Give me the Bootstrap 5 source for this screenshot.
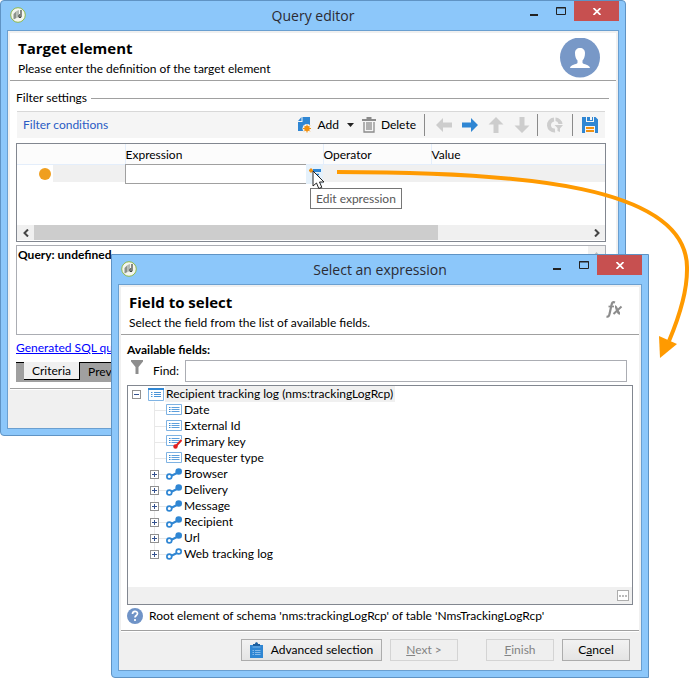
<!DOCTYPE html>
<html lang="en">
<head>
<meta charset="utf-8">
<meta name="viewport" content="width=device-width, initial-scale=1">
<title>Query editor</title>
<link href="https://cdn.jsdelivr.net/npm/bootstrap@5.3.0/dist/css/bootstrap.min.css" rel="stylesheet">
<style>
  body { font-family: Lato, "Open Sans", sans-serif; font-size: 12px; line-height: 16px; color: #000; background: #fff; }
  .desktop { min-height: 681px; overflow: hidden; }
  .win { background: #8cc7fa; border: 1px solid #5f93c4; padding: 0 6px 6px; }
  .win-query { top: 0; left: 0; right: 73px; border-radius: 4px 4px 0 4px; }
  .win-select { top: 254px; left: 111px; right: 50px; border-bottom-left-radius: 4px; }
  .titlebar { display: grid; grid-template-columns: 1fr auto 1fr; height: 29px; }
  .titlebar h1, .head h2 { font-family: "Open Sans", "Noto Sans", sans-serif; }
  .titlebar h1 { font-size: 14px; line-height: 30px; margin: 0; font-weight: 400; color: #2b2b33; }
  .titlebar svg { display: block; }
  .logo { margin: 6px 0 0 3px; }
  .ctl { border: 0; background: transparent; padding: 0; width: 27px; height: 20px; display: flex; align-items: center; justify-content: center; }
  .ctl-close { width: 45px; background: #c75050; }
  .frame { background: #fff; border: 1px solid #6a9fd0; }
  .pane { border: 2px solid #f0f0f0; }
  .head { padding: 5px 16px 3px 8px; border-bottom: 1px solid #a0a0a0; height: 48px; }
  .head h2 { font-size: 15px; line-height: 20px; font-weight: 700; margin: 0 0 3px; }
  .head p { margin: 0; }
  .rule { height: 1px; background: #a0a0a0; }
  .section { padding: 9px 10px 6px 6px; }
  .group { margin-right: -3px; gap: 4px; }
  .tools { margin: 5px 1px 5px; height: 27px; border-top: 1px solid #d8d8d8; background: #f5f5f5; padding: 0 6px; }
  .tools a { color: #2a5bc4; text-decoration: none; }
  .tool { border: 0; background: transparent; padding: 0; display: flex; align-items: center; gap: 5px; color: #000; }
  .arrows { gap: 8px; margin: 0 -2px 0 2px; }
  .sep { width: 1px; height: 22px; background: #8a8a8a; }
  .sheet { border: 1px solid #828790; height: 99px; }
  .sheet table { width: 100%; table-layout: fixed; border-collapse: collapse; }
  .sheet th { font-weight: 400; height: 20px; padding: 2px 0 0; line-height: 17px; background: #fcfcfc; border-left: 1px solid #e4eefb; border-bottom: 1px solid #e4eefb; }
  .sheet th:first-child { border-left: 0; }
  .sheet td { height: 19px; padding: 0; }
  .c-mark, .c-op { width: 108px; }
  .c-expr { width: 198px; }
  .shade { background: #f0f0f0; background-clip: padding-box; border-bottom: 1px solid #fff; height: 18px; }
  .dot { width: 12px; height: 12px; border-radius: 50%; background: #f09f1f; margin: 0 2px 0 22px; flex: none; }
  .expr-input { border: 1px solid #a0a0a0; border-right: 0; height: 20px; min-width: 0; padding: 0 3px; outline: 0; border-radius: 0; margin-top: -1px; }
  .expr-btn { width: 17px; height: 19px; border: 0; padding: 0; background: #e5f1fb; flex: none; }
  .pointer { left: 187px; top: 5px; z-index: 3; }
  .tip { left: 185px; top: 23px; border: 1px solid #767676; background: #fff; color: #575757; padding: 2px 5px; height: 21px; white-space: nowrap; z-index: 2; }
  .hscroll { height: 15px; background: #f0f0f0; margin-bottom: 1px; }
  .hscroll button { width: 17px; border: 0; padding: 0; background: transparent; display: flex; align-items: center; justify-content: center; }
  .thumb { width: 73%; background: #cdcdcd; }
  .query { border: 1px solid #abadb3; height: 90px; margin-top: 3px; font-weight: 700; padding: 1px 1px; }
  .query-scroll { width: 17px; background: #f0f0f0; margin: -1px -1px -1px auto; padding-top: 6px; }
  .sql { color: #00f; display: inline-block; margin: 5px 0 6px; }
  .tabs { background: #a0a0a0; height: 20px; border-top: 1px solid #000; padding-left: 8px; }
  .tabs button { border: 0; padding: 0 8px; background: transparent; color: #000; height: 18px; line-height: 16px; }
  .tabs .current { background: #f0f0f0; border-right: 1px solid #000; border-bottom: 1px solid #000; margin-top: -1px; height: 18px; }
  .foot { background: #f0f0f0; border-top: 1px solid #fff; min-height: 37px; }
  .fields { padding: 7px 6px 6px; }
  .find { margin: 2px 6px 3px 4px; }
  .find label { margin: 0 6px 0 10px; width: 26px; white-space: nowrap; }
  .find input { height: 22px; border: 1px solid #abadb3; min-width: 0; border-radius: 0; padding: 0 4px; outline: 0; }
  .treebox { border: 1px solid #828790; height: 220px; }
  .tree, .tree ul { list-style: none; margin: 0; padding: 0; }
  .tree { padding-left: 4px; }
  .tree ul { margin-left: 18px; position: relative; }
  .tree ul::before { content: ""; position: absolute; left: 4px; top: 0; bottom: 8px; border-left: 1px solid #e8e8e8; }
  .node { display: flex; align-items: center; height: 16px; position: relative; }
  .tree ul .node::before { content: ""; position: absolute; left: 4px; width: 13px; top: 8px; border-top: 1px solid #e8e8e8; }
  .box { width: 9px; height: 9px; border: 1px solid #919191; background: #fff; padding: 0; flex: none; display: flex; align-items: center; justify-content: center; z-index: 1; }
  .box-gap { width: 9px; flex: none; }
  .node > svg { margin: 0 2px 0 7px; flex: none; z-index: 1; background: #fff; }
  .node .chosen { background: #f0f0f0; padding: 0 2px 0 1px; margin-left: -1px; }
  .status { background: #f0f0f0; height: 17px; padding-right: 3px; }
  .status button { width: 12px; height: 11px; border: 1px solid #adadad; background: #fff; padding: 0; display: flex; align-items: center; justify-content: center; }
  .hint { margin-top: 3px; gap: 6px; }
  .actions { padding: 7px 9px 7px; }
  .push { height: 22px; width: 68px; border: 1px solid #acacac; background: linear-gradient(#f2f2f2, #e4e4e4); padding: 0; color: #000; line-height: 18px; }
  .push:disabled { color: #838383; border-color: #d4d4d4; background: #efefef; }
  .push-wide { width: 141px; margin-right: 8px; gap: 8px; }
  .flow { top: 160px; right: 0; pointer-events: none; z-index: 5; }
</style>
</head>
<body>
<main class="desktop position-relative">

  <section class="win win-query position-absolute" aria-label="Query editor">
    <header class="titlebar">
      <svg class="logo" width="16" height="16" viewBox="0 0 16 16"><circle cx="8" cy="8" r="7.3" fill="#f4f6ef" stroke="#8fb84a"/><path d="M3.500 7l3-3v7l-3 1.500z" fill="#8b918b"/><path d="M6.500 4l2.500-1v7l-2.500 1z" fill="#b4bab4"/><path d="M11 3v7M10 7.500c-2 1-1 4 1 2.500" fill="none" stroke="#3d423d" stroke-width="1.200"/></svg>
      <h1>Query editor</h1>
      <div class="d-flex justify-content-end">
        <button class="ctl" aria-label="Minimize"><svg width="8" height="12"><path d="M0 10h8" stroke="#222" stroke-width="2"/></svg></button>
        <button class="ctl" aria-label="Maximize"><svg width="10" height="8"><path d="M.5.500h9v7h-9zM0 1h10" fill="none" stroke="#222"/></svg></button>
        <button class="ctl ctl-close" aria-label="Close"><svg width="8" height="7"><path d="M.5 0l7 7M7.500 0l-7 7" stroke="#fff" stroke-width="1.700"/></svg></button>
      </div>
    </header>
    <div class="frame"><div class="pane">
      <div class="head d-flex justify-content-between">
        <div><h2>Target element</h2><p>Please enter the definition of the target element</p></div>
        <svg width="40" height="40" viewBox="0 0 40 40" class="flex-shrink-0"><circle cx="20" cy="19.500" r="20" fill="#7898c7"/><path d="M20 10c-3 0-5 2-5 5 0 3.500 1 6 2.500 7.500v2.500c-1 1.500-7 1.500-7.500 5h20c-.5-3.500-6.500-3.500-7.500-5v-2.500c1.500-1.500 2.500-4 2.500-7.500 0-3-2-5-5-5z" fill="#fff"/></svg>
      </div>
      <div class="section">
        <div class="group d-flex align-items-center"><span>Filter settings</span><div class="rule flex-grow-1"></div></div>
        <div class="tools d-flex align-items-center">
          <a href="#">Filter conditions</a>
          <button class="tool ms-auto"><svg width="14" height="16" viewBox="0 0 14 16"><path d="M4.500 0H12v8H6v6H0V5h4.500z" fill="#2f86d3"/><path d="M0 4l3.500-4v4z" fill="#2f86d3"/><circle cx="9" cy="11.500" r="4.500" fill="#f5f5f5"/><circle cx="9" cy="11.500" r="2.700" fill="#f09010"/><path d="M9 7.500v8M5 11.500h8M6.200 8.700l5.600 5.600M11.800 8.700l-5.600 5.600" stroke="#f09010"/></svg><span>Add</span></button>
          <button class="tool mx-2" aria-label="More add options"><svg width="7" height="4"><path d="M0 0h7l-3.500 4z" fill="#222"/></svg></button>
          <button class="tool"><svg width="14" height="16" viewBox="0 0 14 16"><path d="M0 2h14v2H0zM4.500 0h5v2h-5z" fill="#8b8b8b"/><path d="M2 5v10h10V5M5 5v8M7 5v8M9 5v8" fill="none" stroke="#8b8b8b" stroke-width="1.300"/></svg><span>Delete</span></button>
          <span class="sep mx-2"></span>
          <div class="arrows d-flex">
            <button class="tool" aria-label="Move left" disabled><svg width="18" height="16" viewBox="0 0 18 16"><path d="M1 8l7-7v4.500h9v5H8V15z" fill="#cdcdcd"/></svg></button>
            <button class="tool" aria-label="Move right"><svg width="18" height="16" viewBox="0 0 18 16"><path d="M17 8l-7-7v4.500H1v5h9V15z" fill="#2f86d3"/></svg></button>
            <button class="tool" aria-label="Move up" disabled><svg width="18" height="16" viewBox="0 0 18 16"><path d="M9 0l7.500 7.500H11.500V16h-5V7.500H1.500z" fill="#cdcdcd"/></svg></button>
            <button class="tool" aria-label="Move down" disabled><svg width="18" height="16" viewBox="0 0 18 16"><path d="M9 16l7.500-7.500H11.500V0h-5v8.500H1.500z" fill="#cdcdcd"/></svg></button>
          </div>
          <span class="sep mx-2"></span>
          <button class="tool" aria-label="Distribution of values" disabled><svg width="18" height="16" viewBox="0 0 18 16"><path d="M8 2.500A5.500 5.500 0 1 0 9 13.500" fill="none" stroke="#cdcdcd" stroke-width="4"/><path d="M9.500.5a7.500 7.500 0 0 1 7 6.500h-4a3.500 3.500 0 0 0-3-3zM8.500 8H17l-3 3.500V15l-2.500-1v-3z" fill="#cdcdcd"/></svg></button>
          <span class="sep mx-2"></span>
          <button class="tool" aria-label="Save"><svg width="18" height="16" viewBox="0 0 18 16"><path d="M1 0h4v5h8V0h1.500L17 2.500V16h-3V9H4v7H1z" fill="#2f86d3"/><path d="M6 0h6v4H6z" fill="#2f86d3"/><path d="M9 0h2v3H9z" fill="#f5f5f5"/><path d="M4 6h10v3H4z" fill="#2f86d3"/><path d="M5 11h8M5 14h8" stroke="#f09010" stroke-width="2"/></svg></button>
        </div>
        <div class="sheet d-flex flex-column">
          <table>
            <thead><tr><th class="c-mark"></th><th class="c-expr">Expression</th><th class="c-op">Operator</th><th>Value</th></tr></thead>
            <tbody><tr>
              <td><div class="d-flex align-items-center"><span class="dot"></span><div class="shade flex-grow-1"></div></div></td>
              <td><div class="d-flex position-relative">
                <input class="expr-input flex-grow-1" type="text" aria-label="Expression">
                <button class="expr-btn" aria-label="Edit expression"><svg width="14" height="14" viewBox="0 0 14 14"><path d="M5 1h8v3H5z" fill="#2f86d3"/><path d="M5 6.500h6M5 9.500h7" stroke="#2f86d3" stroke-width="1.500"/><path d="M1 2.500h4M3 .5v4" stroke="#f09010" stroke-width="2"/></svg></button>
                <svg class="pointer position-absolute" width="14" height="20" viewBox="0 0 14 20"><path d="M1 1v15l3.500-3 2.300 5.500 3-1.200-2.300-5.300H12z" fill="#fff" stroke="#222"/></svg>
                <div class="tip position-absolute" role="tooltip">Edit expression</div>
              </div></td>
              <td><div class="shade"></div></td><td><div class="shade"></div></td>
            </tr></tbody>
          </table>
          <div class="hscroll d-flex mt-auto">
            <button aria-label="Scroll left"><svg width="6" height="8"><path d="M5 0.500L1.500 4 5 7.500" fill="none" stroke="#444" stroke-width="2"/></svg></button>
            <div class="flex-grow-1 d-flex"><div class="thumb"></div></div>
            <button aria-label="Scroll right"><svg width="6" height="8"><path d="M1 0.500L4.500 4 1 7.500" fill="none" stroke="#444" stroke-width="2"/></svg></button>
          </div>
        </div>
        <div class="query d-flex"><span>Query: undefined</span><div class="query-scroll d-flex justify-content-center"><svg width="7" height="4"><path d="M0 4l3.500-4L7 4z" fill="#bbb"/></svg></div></div>
        <a class="sql" href="#">Generated SQL qu</a>
        <div class="tabs d-flex"><button class="current">Criteria</button><button>Preview</button></div>
      </div>
      <div class="rule"></div>
      <div class="foot"></div>
    </div></div>
  </section>

  <section class="win win-select position-absolute" aria-label="Select an expression">
    <header class="titlebar">
      <svg class="logo" width="16" height="16" viewBox="0 0 16 16"><circle cx="8" cy="8" r="7.3" fill="#f4f6ef" stroke="#8fb84a"/><path d="M3.500 7l3-3v7l-3 1.500z" fill="#8b918b"/><path d="M6.500 4l2.500-1v7l-2.500 1z" fill="#b4bab4"/><path d="M11 3v7M10 7.500c-2 1-1 4 1 2.500" fill="none" stroke="#3d423d" stroke-width="1.200"/></svg>
      <h1>Select an expression</h1>
      <div class="d-flex justify-content-end">
        <button class="ctl" aria-label="Minimize"><svg width="8" height="12"><path d="M0 10h8" stroke="#222" stroke-width="2"/></svg></button>
        <button class="ctl" aria-label="Maximize"><svg width="10" height="8"><path d="M.5.500h9v7h-9zM0 1h10" fill="none" stroke="#222"/></svg></button>
        <button class="ctl ctl-close" aria-label="Close"><svg width="8" height="7"><path d="M.5 0l7 7M7.500 0l-7 7" stroke="#fff" stroke-width="1.700"/></svg></button>
      </div>
    </header>
    <div class="frame"><div class="pane">
      <div class="head d-flex justify-content-between">
        <div><h2>Field to select</h2><p>Select the field from the list of available fields.</p></div>
        <svg class="mt-2" width="17" height="20" viewBox="0 0 17 20" fill="none" stroke="#8d8d8d"><path d="M9 2.500C6.500 1.500 6 3 5.500 5L3.500 14c-.5 2.200-1 3-3 2.500" stroke-width="2.200"/><path d="M2.500 6.500h5.500" stroke-width="1.700"/><path d="M9 6.500c2 0 2 7 5 7" stroke-width="2.500"/><path d="M15.500 6.500L7.500 14" stroke-width="2"/></svg>
      </div>
      <div class="fields">
        <div class="fw-bold">Available fields:</div>
        <div class="find d-flex align-items-center">
          <svg width="12" height="14" class="align-self-start"><path d="M0 0h12v1.500L7.500 7v7h-3V7L0 1.500z" fill="#8d8d8d"/></svg>
          <label for="find">Find:</label><input id="find" type="text" class="flex-grow-1">
        </div>
        <div class="treebox d-flex flex-column">
          <svg width="0" height="0" class="position-absolute">
            <symbol id="field" viewBox="0 0 16 12"><path d="M.5.500h15v10H.5z" fill="#fff" stroke="#7fb3e3"/><path d="M3 3.500h1.500M3 7.500h1.500M3 5.500h1.500" stroke="#2f86d3"/><path d="M5.500 3.500h8M5.500 5.500h8M5.500 7.500h8" stroke="#5c9fdc"/></symbol>
            <symbol id="link" viewBox="0 0 16 12"><path d="M5 8l6-3" stroke="#2f86d3" stroke-width="2"/><circle cx="3.300" cy="8.500" r="2.400" fill="#fff" stroke="#2f86d3" stroke-width="1.700"/><circle cx="12.700" cy="3.500" r="3.300" fill="#2f86d3"/></symbol>
          </svg>
          <ul class="tree">
            <li>
              <div class="node"><button class="box" aria-label="Collapse"><svg width="5" height="5"><path d="M0 2.500h5" stroke="#34528f"/></svg></button><svg width="16" height="13" viewBox="0 0 16 13"><path d="M.5 1.500h15v11H.5z" fill="#fff" stroke="#7fb3e3"/><path d="M0 1h16" stroke="#2f86d3" stroke-width="2"/><path d="M3 4.500h1.500M3 6.500h1.500M3 8.500h1.500M6 4.500h7M6 6.500h7M6 8.500h7" stroke="#4a94d8"/></svg><span class="chosen">Recipient tracking log (nms:trackingLogRcp)</span></div>
              <ul>
                <li class="node"><span class="box-gap"></span><svg width="16" height="12"><use href="#field"/></svg><span>Date</span></li>
                <li class="node"><span class="box-gap"></span><svg width="16" height="12"><use href="#field"/></svg><span>External Id</span></li>
                <li class="node"><span class="box-gap"></span><svg width="16" height="14" viewBox="0 0 16 14"><use href="#field" width="16" height="12"/><path d="M16 4v10H7z" fill="#fff"/><path d="M15.500 5L10 11" stroke="#e02020" stroke-width="2"/><circle cx="9.500" cy="11.500" r="2.200" fill="#e02020"/></svg><span>Primary key</span></li>
                <li class="node"><span class="box-gap"></span><svg width="16" height="12"><use href="#field"/></svg><span>Requester type</span></li>
                <li class="node"><button class="box" aria-label="Expand Browser"><svg width="5" height="5"><path d="M0 2.500h5M2.500 0v5" stroke="#34528f"/></svg></button><svg width="16" height="12"><use href="#link"/></svg><span>Browser</span></li>
                <li class="node"><button class="box" aria-label="Expand Delivery"><svg width="5" height="5"><path d="M0 2.500h5M2.500 0v5" stroke="#34528f"/></svg></button><svg width="16" height="12"><use href="#link"/></svg><span>Delivery</span></li>
                <li class="node"><button class="box" aria-label="Expand Message"><svg width="5" height="5"><path d="M0 2.500h5M2.500 0v5" stroke="#34528f"/></svg></button><svg width="16" height="12"><use href="#link"/></svg><span>Message</span></li>
                <li class="node"><button class="box" aria-label="Expand Recipient"><svg width="5" height="5"><path d="M0 2.500h5M2.500 0v5" stroke="#34528f"/></svg></button><svg width="16" height="12"><use href="#link"/></svg><span>Recipient</span></li>
                <li class="node"><button class="box" aria-label="Expand Url"><svg width="5" height="5"><path d="M0 2.500h5M2.500 0v5" stroke="#34528f"/></svg></button><svg width="16" height="12"><use href="#link"/></svg><span>Url</span></li>
                <li class="node"><button class="box" aria-label="Expand Web tracking log"><svg width="5" height="5"><path d="M0 2.500h5M2.500 0v5" stroke="#34528f"/></svg></button><svg width="16" height="12"><use href="#link"/><circle cx="12.700" cy="3.500" r="1.600" fill="#fff"/></svg><span>Web tracking log</span></li>
              </ul>
            </li>
          </ul>
          <div class="status mt-auto d-flex justify-content-end align-items-center"><button aria-label="More"><svg width="8" height="2"><path d="M0 1h2M3 1h2M6 1h2" stroke="#777"/></svg></button></div>
        </div>
        <div class="hint d-flex align-items-center"><svg width="16" height="16" viewBox="0 0 16 16"><circle cx="8" cy="8" r="8" fill="#6f93c7"/><path d="M5.500 6c0-3.500 5-3.500 5-.5 0 2-2.500 2-2.500 4M8 11v2" fill="none" stroke="#fff" stroke-width="1.700"/></svg><span>Root element of schema 'nms:trackingLogRcp' of table 'NmsTrackingLogRcp'</span></div>
      </div>
      <div class="rule"></div>
      <div class="foot actions d-flex justify-content-end">
        <button class="push push-wide d-flex align-items-center justify-content-center"><svg width="13" height="16" viewBox="0 0 13 16"><path d="M0 3h13v13H0z" fill="#2f86d3"/><path d="M3 2h2c0-2.500 3-2.500 3 0h2v2H3z" fill="#1d5f9f"/><path d="M2.500 5h8" stroke="#8cc0ee" stroke-width=".8"/><path d="M2.500 8.500H4M2.500 10.500H4M2.500 12.500H4M5 8.500h5.500M5 10.500h5.500M5 12.500h5.500" stroke="#9cc8f0" stroke-width=".8"/></svg><span>Advanced selection</span></button>
        <button class="push me-4" disabled><u>N</u>ext &gt;</button>
        <button class="push ms-1 me-2" disabled><u>F</u>inish</button>
        <button class="push">C<u>a</u>ncel</button>
      </div>
    </div></div>
  </section>

  <svg class="flow position-absolute" width="365" height="210" viewBox="334 160 365 210"><path d="M337 172C520 172 690 185 687 270C687 295 677 322 669 341" fill="none" stroke="#ff9a00" stroke-width="4"/><path d="M659 336l18 8-17 14z" fill="#ff9a00"/></svg>
</main>
<script src="https://cdn.jsdelivr.net/npm/bootstrap@5.3.0/dist/js/bootstrap.bundle.min.js"></script>
</body>
</html>
